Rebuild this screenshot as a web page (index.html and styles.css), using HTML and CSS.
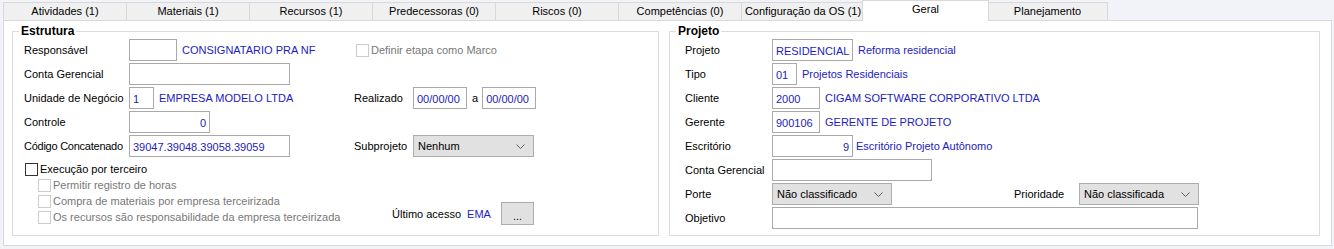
FILE: index.html
```html
<!DOCTYPE html>
<html lang="pt-BR">
<head>
  <meta charset="UTF-8" />
  <title>Geral</title>
  <link rel="stylesheet" href="styles.css">
</head>
<body>
  <div class="abas">
    <div class="aba">Atividades (1)</div>
    <div class="aba">Materiais (1)</div>
    <div class="aba">Recursos (1)</div>
    <div class="aba">Predecessoras (0)</div>
    <div class="aba">Riscos (0)</div>
    <div class="aba">Competências (0)</div>
    <div class="aba">Configuração da OS (1)</div>
    <div class="aba ativa">Geral</div>
    <div class="aba ultima">Planejamento</div>
  </div>

  <div class="painel">
    <fieldset class="grupo estrutura">
      <legend>Estrutura</legend>
      <div class="grade-estrutura">
        <span class="rotulo">Responsável</span>
        <div class="campo"><div class="caixa w48"></div><span class="desc">CONSIGNATARIO PRA NF</span></div>
        <div class="campo meio"><span class="check desab"></span><span class="texto-desab">Definir etapa como Marco</span></div>

        <span class="rotulo">Conta Gerencial</span>
        <div class="campo"><div class="caixa w161"></div></div>
        <div class="meio"></div>

        <span class="rotulo">Unidade de Negócio</span>
        <div class="campo"><div class="caixa w25">1</div><span class="desc">EMPRESA MODELO LTDA</span></div>
        <span class="rotulo">Realizado</span>
        <div class="campo datas"><div class="caixa w54">00/00/00</div><span class="entre">a</span><div class="caixa w54">00/00/00</div></div>

        <span class="rotulo">Controle</span>
        <div class="campo"><div class="caixa w81 direita">0</div></div>
        <div class="meio"></div>

        <span class="rotulo apertado">Código Concatenado</span>
        <div class="campo"><div class="caixa w161">39047.39048.39058.39059</div></div>
        <span class="rotulo">Subprojeto</span>
        <div class="campo"><div class="combo w121">Nenhum<svg class="seta" width="9" height="5" viewBox="0 0 9 5"><polyline points="0.5,0.5 4.5,4.5 8.5,0.5" fill="none" stroke="#606060" stroke-width="1"/></svg></div></div>
      </div>

      <div class="rodape-estrutura">
        <div class="terceiro">
          <div class="linha-check"><span class="check"></span><span>Execução por terceiro</span></div>
          <div class="linha-check sub"><span class="check desab"></span><span class="texto-desab">Permitir registro de horas</span></div>
          <div class="linha-check sub"><span class="check desab"></span><span class="texto-desab">Compra de materiais por empresa terceirizada</span></div>
          <div class="linha-check sub"><span class="check desab"></span><span class="texto-desab">Os recursos são responsabilidade da empresa terceirizada</span></div>
        </div>
        <div class="acesso">
          <span>Último acesso</span>
          <span class="desc">EMA</span>
          <div class="botao">...</div>
        </div>
      </div>
    </fieldset>

    <fieldset class="grupo projeto">
      <legend>Projeto</legend>
      <div class="grade-projeto">
        <span class="rotulo">Projeto</span>
        <div class="campo"><div class="caixa w81">RESIDENCIAL</div><span class="desc">Reforma residencial</span></div>

        <span class="rotulo">Tipo</span>
        <div class="campo"><div class="caixa w25">01</div><span class="desc">Projetos Residenciais</span></div>

        <span class="rotulo">Cliente</span>
        <div class="campo"><div class="caixa w48">2000</div><span class="desc">CIGAM SOFTWARE CORPORATIVO LTDA</span></div>

        <span class="rotulo">Gerente</span>
        <div class="campo"><div class="caixa w48">900106</div><span class="desc">GERENTE DE PROJETO</span></div>

        <span class="rotulo">Escritório</span>
        <div class="campo"><div class="caixa w81 direita">9</div><span class="desc perto">Escritório Projeto Autônomo</span></div>

        <span class="rotulo">Conta Gerencial</span>
        <div class="campo"><div class="caixa w160"></div></div>

        <span class="rotulo">Porte</span>
        <div class="campo">
          <div class="combo w120">Não classificado<svg class="seta" width="9" height="5" viewBox="0 0 9 5"><polyline points="0.5,0.5 4.5,4.5 8.5,0.5" fill="none" stroke="#606060" stroke-width="1"/></svg></div>
          <span class="rotulo prioridade">Prioridade</span>
          <div class="combo w120">Não classificada<svg class="seta" width="9" height="5" viewBox="0 0 9 5"><polyline points="0.5,0.5 4.5,4.5 8.5,0.5" fill="none" stroke="#606060" stroke-width="1"/></svg></div>
        </div>

        <span class="rotulo">Objetivo</span>
        <div class="campo"><div class="caixa w426"></div></div>
      </div>
    </fieldset>
  </div>
</body>
</html>
```
FILE: styles.css
```css
* { box-sizing: border-box; }
body {
  margin: 0; padding: 2px 2px 0 3px; background: #f2f3f8;
  font-family: 'Liberation Sans', Arial, sans-serif; font-size: 11px; color: #000;
}

/* abas */
.abas { display: flex; height: 18px; align-items: flex-end; }
.aba {
  width: 124px; height: 18px; line-height: 17px; text-align: center;
  background: #f0f0f0; border: 1px solid #d9d9d9; border-bottom: none;
  margin-right: -1px; white-space: nowrap;
}
.aba.ativa {
  width: 127px; height: 21px; margin: 0 -2px -1px -2px; line-height: 17px;
  background: #fff; position: relative; z-index: 2; border-color: #d9d9d9;
}
.aba.ultima { width: 121px; }

/* painel */
.painel {
  height: 226px; background: #fff; border: 1px solid #d9d9d9;
  display: flex; gap: 10px; padding: 3px 11px 9px 8px;
}
.grupo {
  margin: 0; border: 1px solid #dcdcdc; min-width: 0;
}
.grupo legend {
  font-weight: bold; font-size: 12px; line-height: 14px; padding: 0 2px;
}
.estrutura { width: 647px; padding: 0 8px 0 11px; display: flex; flex-direction: column; }
.estrutura legend { margin-left: -5px; }
.projeto { flex: 1; padding: 0 8px 0 15px; }
.projeto legend { margin-left: -9px; }

/* grades */
.grade-estrutura {
  display: grid; grid-template-columns: 105px 225px 59px 1fr;
  grid-auto-rows: 24px; align-items: center;
}
.grade-projeto {
  display: grid; grid-template-columns: 87px 1fr;
  grid-auto-rows: 24px; align-items: center;
}
.rotulo { white-space: nowrap; }
.rotulo.apertado { letter-spacing: -0.25px; }
.campo { display: flex; align-items: center; white-space: nowrap; }
.meio { grid-column: 3 / 5; }
.campo.meio { margin-left: 2px; }

.caixa {
  height: 22px; line-height: 23px; border: 1px solid #a9a9a9; background: #fff;
  padding: 0 3px; color: #1c1cc0; overflow: hidden; white-space: nowrap;
}
.caixa.direita { text-align: right; }
.w25 { width: 25px; } .w48 { width: 48px; } .w54 { width: 54px; }
.w81 { width: 81px; } .w120 { width: 120px; } .w121 { width: 121px; }
.w160 { width: 160px; } .w161 { width: 161px; } .w426 { width: 426px; }

.desc { color: #1c1cc0; margin-left: 5px; }
.desc.perto { margin-left: 3px; }
.datas .entre { margin: 0 4px 0 5px; }

.combo {
  height: 22px; line-height: 21px; border: 1px solid #adadad; background: #e1e1e1;
  padding: 0 4px; position: relative; white-space: nowrap;
}
.combo .seta { position: absolute; right: 8px; top: 8px; }
.prioridade { width: 65px; margin-left: 122px; }

/* checkbox */
.check {
  width: 13px; height: 13px; border: 1px solid #333; background: #fff;
  display: inline-block; margin-right: 2px; flex-shrink: 0;
}
.check.desab { border-color: #cccccc; }
.texto-desab { color: #787878; }

.rodape-estrutura {
  display: flex; justify-content: space-between; align-items: flex-end;
  margin-top: 3px;
}
.terceiro { display: flex; flex-direction: column; }
.linha-check { display: flex; align-items: center; height: 16px; margin-left: 1px; }
.linha-check.sub { margin-left: 14px; }

.acesso { display: flex; align-items: center; width: 142px; margin-right: 116px; }
.acesso .desc { margin-left: 6px; }
.botao {
  width: 33px; height: 23px; margin-left: auto; border: 1px solid #adadad;
  background: #e1e1e1; text-align: center; line-height: 26px;
}
```
